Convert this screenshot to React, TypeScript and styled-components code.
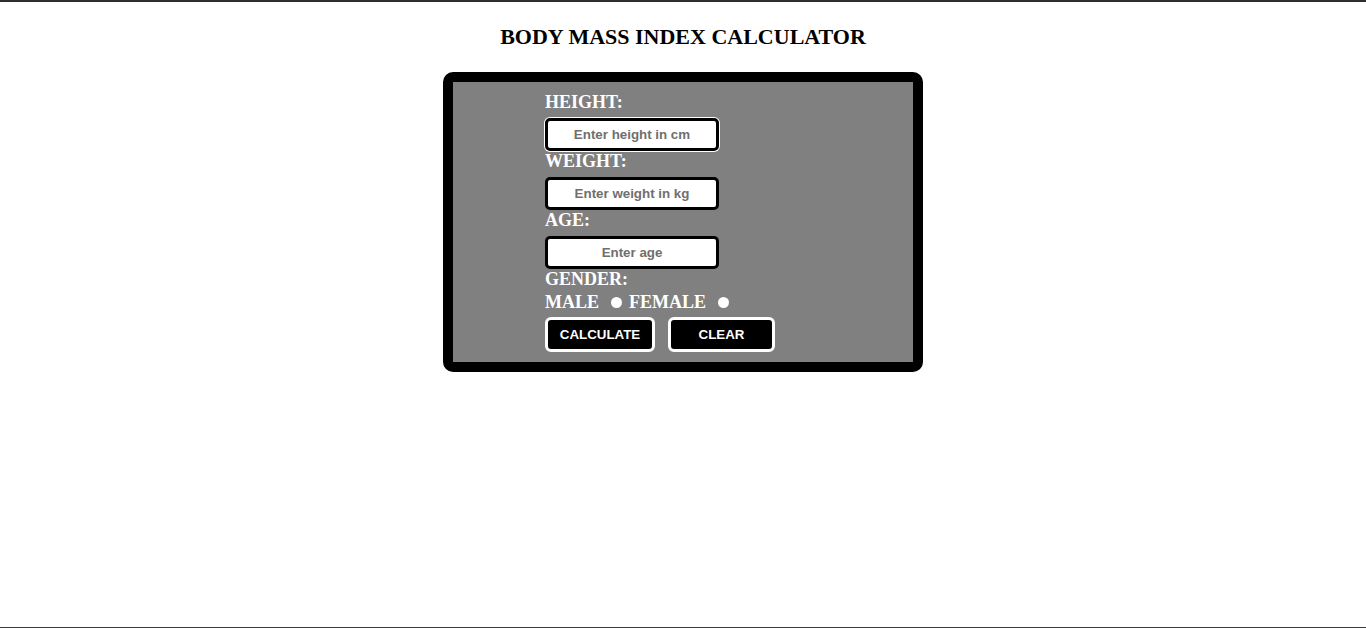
import React from "react";
import styled, { createGlobalStyle } from "styled-components";

const GlobalStyle = createGlobalStyle`
  html, body { margin: 0; padding: 0; background: #ffffff; }
  body { font-family: "Liberation Serif", "Times New Roman", serif; }
  * { box-sizing: border-box; }
`;

const Page = styled.div`
  height: 628px;
  border-top: 2px solid #2e2e2e;
  border-bottom: 1px solid #3a3a3a;
  display: flex;
  flex-direction: column;
  align-items: center;
`;

const Title = styled.h2`
  margin: 21px 0 22px;
  font-family: "Liberation Serif", "Times New Roman", serif;
  font-weight: bold;
  font-size: 22px;
  line-height: 27px;
  color: #000;
  text-align: center;
`;

const Card = styled.form`
  width: 480px;
  height: 300px;
  border: 10px solid #000;
  border-radius: 10px;
  background: #808080;
  padding: 10px 0 10px 92px;
  display: flex;
  flex-direction: column;
  align-items: flex-start;
`;

const Label = styled.label`
  display: block;
  font-family: "Liberation Serif", "Times New Roman", serif;
  font-weight: bold;
  font-size: 18px;
  line-height: 21px;
  height: 19px;
  color: #ffffff;
`;

const Field = styled.input<{ $focused?: boolean }>`
  margin-top: 7px;
  width: 174px;
  height: 33px;
  border: 3px solid #000;
  border-radius: 5px;
  background: #fff;
  text-align: center;
  font-family: "Liberation Sans", Arial, sans-serif;
  font-weight: bold;
  font-size: 13.333px;
  color: #333;
  outline: none;
  padding: 0;
  box-shadow: ${(p) => (p.$focused ? "0 0 0 1px #ffffff" : "none")};
  &::placeholder {
    color: #6f6f6f;
    opacity: 1;
  }
`;

const GenderRow = styled.div`
  margin-top: 3px;
  padding-top: 2px;
  height: 21px;
  display: flex;
  align-items: center;
  font-family: "Liberation Serif", "Times New Roman", serif;
  font-weight: bold;
  font-size: 18px;
  line-height: 19px;
  color: #fff;
`;

const Radio = styled.input<{ $right: number }>`
  appearance: none;
  -webkit-appearance: none;
  width: 11px;
  height: 11px;
  border-radius: 50%;
  background: #fff;
  border: none;
  margin: 0 ${(p) => p.$right}px 0 12px;
  padding: 0;
`;

const Buttons = styled.div`
  margin-top: 5px;
  display: flex;
  gap: 13px;
`;

const Button = styled.button<{ $w: number }>`
  width: ${(p) => p.$w}px;
  height: 35px;
  background: #000;
  color: #fff;
  border: 3px solid #fff;
  border-radius: 6px;
  font-family: "Liberation Sans", Arial, sans-serif;
  font-weight: bold;
  font-size: 13.333px;
  padding: 0;
  cursor: pointer;
`;

export default function App() {
  return (
    <>
      <GlobalStyle />
      <Page>
        <Title>BODY MASS INDEX CALCULATOR</Title>
        <Card onSubmit={(e) => e.preventDefault()}>
          <Label>HEIGHT:</Label>
          <Field $focused placeholder="Enter height in cm" />
          <Label>WEIGHT:</Label>
          <Field placeholder="Enter weight in kg" />
          <Label>AGE:</Label>
          <Field placeholder="Enter age" />
          <Label>GENDER:</Label>
          <GenderRow>
            MALE
            <Radio type="radio" name="gender" $right={7} />
            FEMALE
            <Radio type="radio" name="gender" $right={0} />
          </GenderRow>
          <Buttons>
            <Button type="button" $w={110}>CALCULATE</Button>
            <Button type="button" $w={107}>CLEAR</Button>
          </Buttons>
        </Card>
      </Page>
    </>
  );
}
